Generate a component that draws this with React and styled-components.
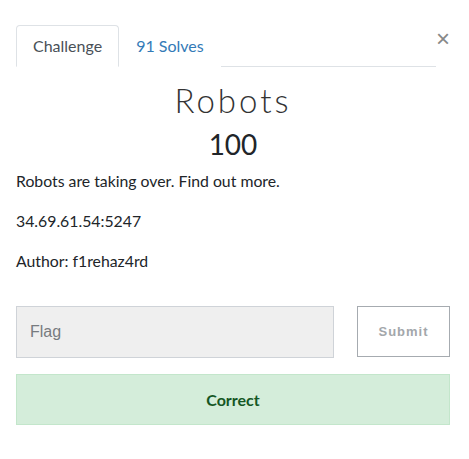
import React, { useState } from "react";
import styled, { createGlobalStyle } from "styled-components";

const GlobalStyle = createGlobalStyle`
  html, body {
    margin: 0;
    padding: 0;
    background: #fff;
  }
  body {
    font-family: "Lato", "Noto Sans", sans-serif;
    color: #212529;
  }
`;

const Modal = styled.div`
  width: 469px;
  padding: 25px 19px 0 16px;
  box-sizing: border-box;
`;

const Header = styled.div`
  display: flex;
  align-items: flex-start;
`;

const Tabs = styled.ul`
  flex: 1;
  display: flex;
  margin: 0;
  padding: 0;
  list-style: none;
  border-bottom: 1px solid #dee2e6;
`;

const Tab = styled.li`
  margin-bottom: -1px;
  padding: 8px 16px;
  font-size: 16px;
  line-height: 24px;
  border: 1px solid ${(p) => (p.active ? "#dee2e6" : "transparent")};
  border-bottom-color: ${(p) => (p.active ? "#fff" : "transparent")};
  border-radius: 4px 4px 0 0;
  background: #fff;
  color: ${(p) => (p.active ? "#495057" : "#337ab7")};
  cursor: pointer;
`;

const Close = styled.button`
  width: 14px;
  margin-top: 2px;
  padding: 0;
  border: 0;
  background: none;
  font-family: "Liberation Sans", sans-serif;
  font-size: 24px;
  line-height: 24px;
  color: #888;
  cursor: pointer;
`;

const Title = styled.h3`
  margin: 14px 0 0;
  text-align: center;
  font-family: "Lato", sans-serif;
  font-weight: 300;
  font-size: 33px;
  line-height: 38px;
  letter-spacing: 3px;
  color: #333;
`;

const Value = styled.h4`
  margin: 8px 0 8px;
  text-align: center;
  font-weight: 400;
  font-size: 28px;
  line-height: 34px;
  color: #212529;
`;

const Text = styled.p`
  margin: 0 0 16px;
  font-size: 15.8px;
  line-height: 24px;
  color: #212529;
`;

const Form = styled.form`
  display: flex;
  gap: 23px;
  margin-top: 33px;
`;

const FlagInput = styled.input`
  width: 318px;
  height: 52px;
  box-sizing: border-box;
  padding: 0 13px;
  border: 1px solid #cfd3d8;
  background: #efefef;
  font-family: "Liberation Sans", sans-serif;
  font-size: 16px;
  color: #495057;
  outline: none;

  &::placeholder {
    color: #777b80;
  }
`;

const SubmitButton = styled.button`
  width: 93px;
  height: 51px;
  box-sizing: border-box;
  border: 1px solid #a6abb0;
  background: #fff;
  font-family: "Liberation Sans", sans-serif;
  font-weight: 700;
  font-size: 13px;
  letter-spacing: 1px;
  color: #a3a7ab;
  cursor: pointer;
`;

const Alert = styled.div`
  margin-top: 16px;
  height: 51px;
  box-sizing: border-box;
  display: flex;
  align-items: center;
  justify-content: center;
  border: 1px solid #c3e6cb;
  background: #d4edda;
  color: #155724;
  font-weight: 700;
  font-size: 16px;
`;

const App = () => {
  const [tab, setTab] = useState("challenge");
  const [flag, setFlag] = useState("");

  const handleSubmit = (ev) => {
    ev.preventDefault();
  };

  return (
    <>
      <GlobalStyle />
      <Modal>
        <Header>
          <Tabs>
            <Tab active={tab === "challenge"} onClick={() => setTab("challenge")}>
              Challenge
            </Tab>
            <Tab active={tab === "solves"} onClick={() => setTab("solves")}>
              91 Solves
            </Tab>
          </Tabs>
          <Close aria-label="Close">×</Close>
        </Header>
        <Title>Robots</Title>
        <Value>100</Value>
        <Text>Robots are taking over. Find out more.</Text>
        <Text>34.69.61.54:5247</Text>
        <Text>Author: f1rehaz4rd</Text>
        <Form onSubmit={handleSubmit}>
          <FlagInput
            placeholder="Flag"
            value={flag}
            onChange={(ev) => setFlag(ev.target.value)}
          />
          <SubmitButton type="submit">Submit</SubmitButton>
        </Form>
        <Alert>Correct</Alert>
      </Modal>
    </>
  );
};

export default App;
